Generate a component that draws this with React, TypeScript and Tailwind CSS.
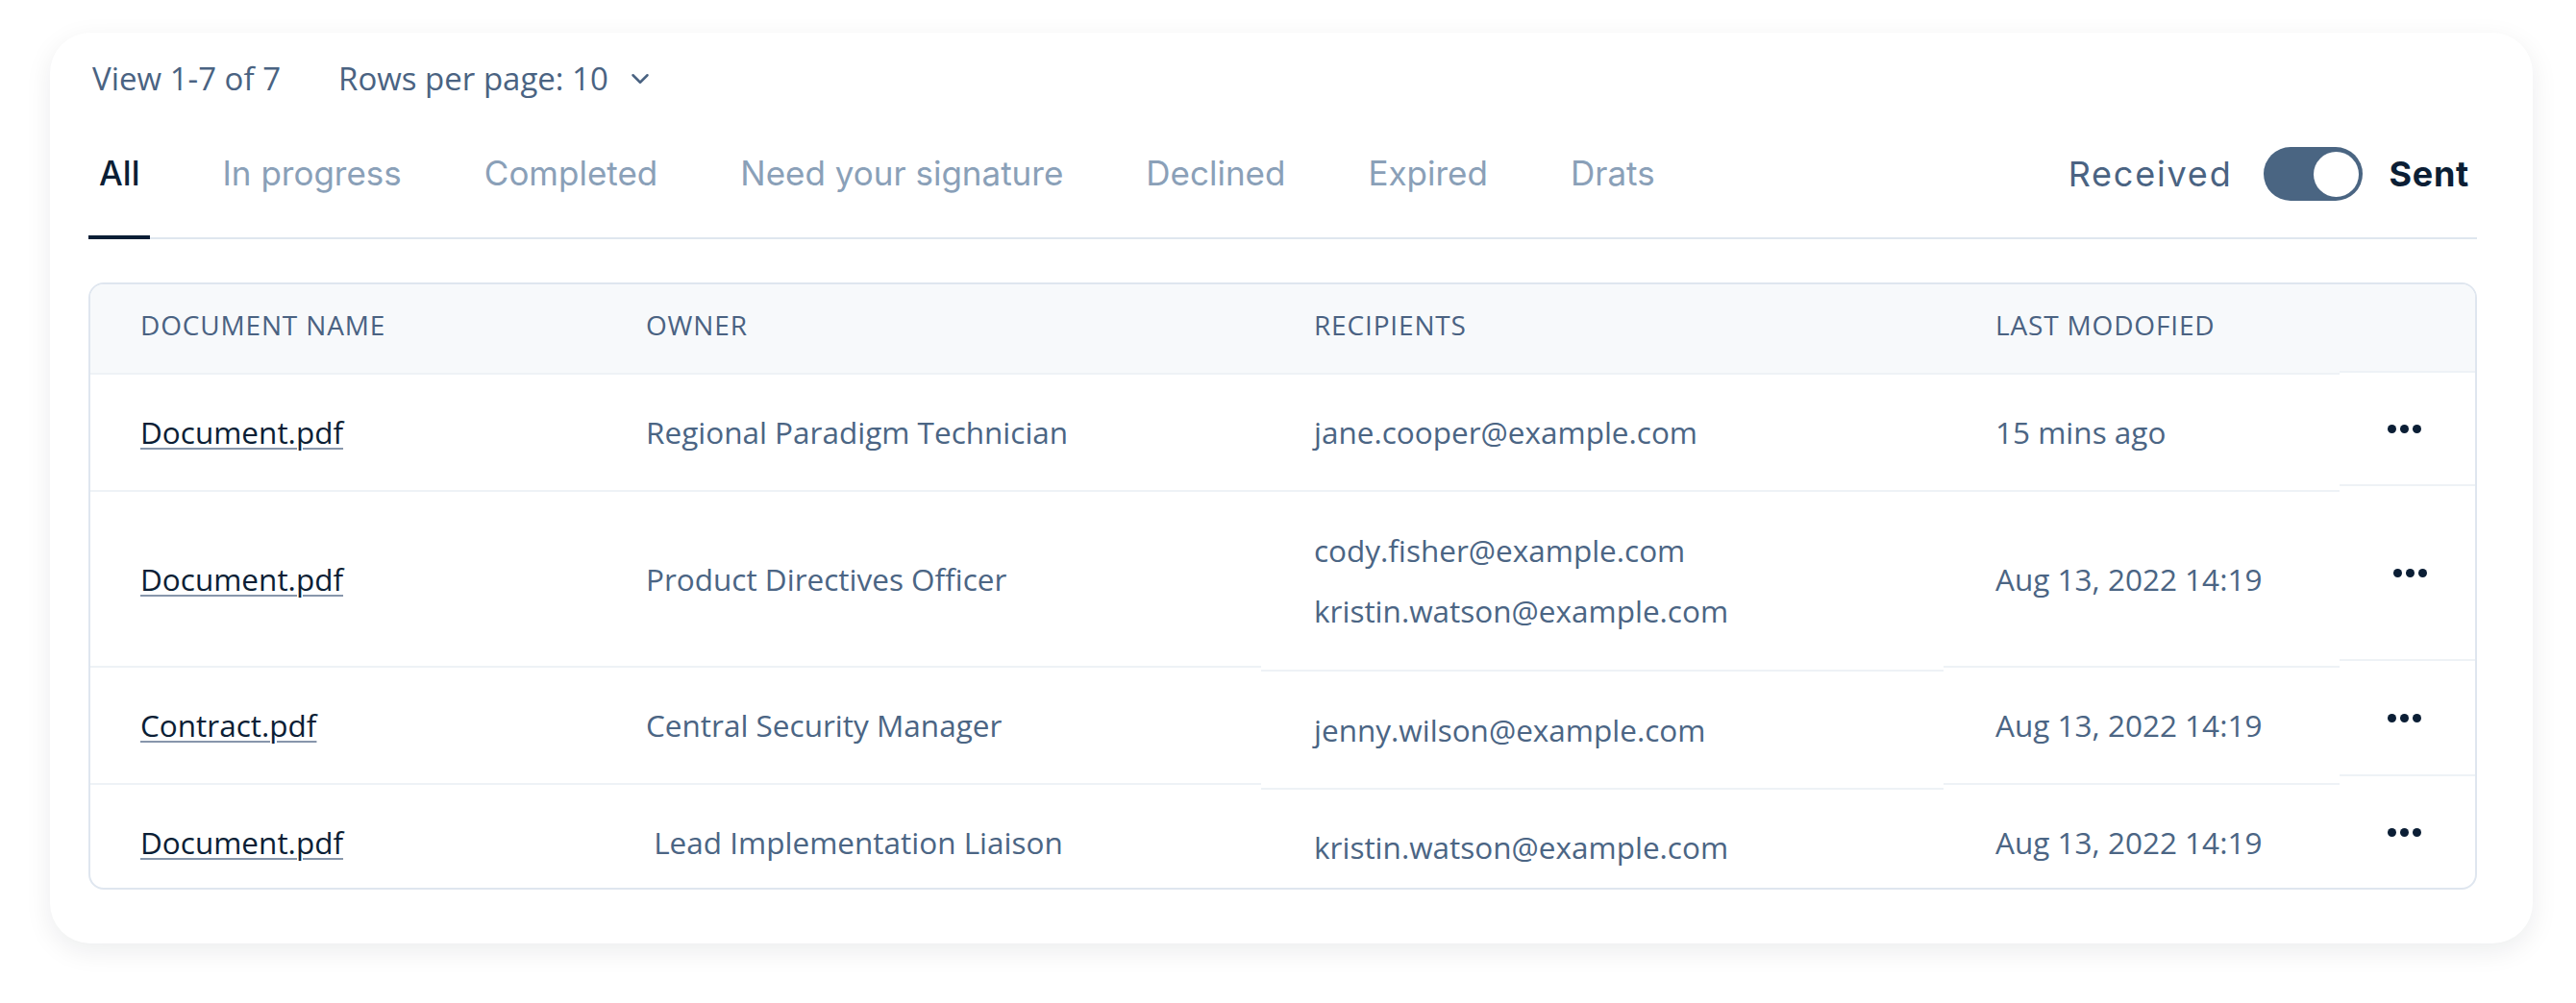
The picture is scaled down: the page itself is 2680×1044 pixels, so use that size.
import { ChevronDown } from "lucide-react"

const tabs = ["All", "In progress", "Completed", "Need your signature", "Declined", "Expired", "Drats"]

const docs = ["Document.pdf", "Document.pdf", "Contract.pdf", "Document.pdf"]
const owners = ["Regional Paradigm Technician", "Product Directives Officer", "Central Security Manager", " Lead Implementation Liaison"]
const recipients = [["jane.cooper@example.com"], ["cody.fisher@example.com", "kristin.watson@example.com"], ["jenny.wilson@example.com"], ["kristin.watson@example.com"]]
const modified = ["15 mins ago", "Aug 13, 2022 14:19", "Aug 13, 2022 14:19", "Aug 13, 2022 14:19"]

// row heights differ a little per column, like in the design
const baseRows = ["h-[122px]", "h-[183px]", "h-[122px]", "h-[122px]"]
const recipientRows = ["h-[122px]", "h-[187px]", "h-[123px]", "h-[122px]"]
const actionRows = ["h-[118px]", "h-[182px]", "h-[120px]", "flex-1"]

function Dots() {
  return (
    <svg width="35" height="9" viewBox="0 0 35 9" fill="#0b1e35">
      <circle cx="4.5" cy="4.5" r="4.5" />
      <circle cx="17.5" cy="4.5" r="4.5" />
      <circle cx="30.5" cy="4.5" r="4.5" />
    </svg>
  )
}

function HeaderCell({ label, pad }: { label: string; pad: string }) {
  return (
    <div className={`h-[92px] shrink-0 bg-[#f7f9fb] flex items-center pb-[8px] ${pad} text-[28px] tracking-[0.03em] uppercase text-[#4a6282]`}>
      {label}
    </div>
  )
}

export default function App() {
  return (
    <div className="min-h-screen bg-white pt-[34px] pl-[52px] font-['Open_Sans',sans-serif]">
      <div className="w-[2583px] h-[948px] rounded-[42px] bg-white shadow-[0_8px_28px_rgba(15,23,42,0.08)] pl-[40px] pr-[58px] pt-[26px]">
        {/* pagination info */}
        <div className="flex items-center h-[44px] text-[33px] leading-[44px] text-[#4a6382]">
          <span className="pl-[4px]">View 1-7 of 7</span>
          <span className="ml-[60px]">Rows per page: 10</span>
          <ChevronDown className="ml-[18px] w-[30px] h-[30px]" strokeWidth={2} />
        </div>

        {/* tabs */}
        <div className="mt-[49px] flex items-end border-b-2 border-[#dfe6ef] font-['Inter',sans-serif]">
          <div className="flex items-end gap-[64px]">
            {tabs.map((t, i) => (
              <div
                key={t}
                className={`-mb-[2px] px-[11px] pb-[41px] border-b-4 text-[35px] leading-[48px] ${
                  i === 0 ? "border-[#0b1e35] text-[#0b1e35] font-medium" : "border-transparent text-[#8aa0b8]"
                }`}
              >
                {t}
              </div>
            ))}
          </div>
          <div className="ml-auto mb-[38px] mr-[8px] flex items-center text-[36px] leading-[48px]">
            <span className="text-[#4a6382] tracking-[0.05em]">Received</span>
            <div className="ml-[32px] w-[103px] h-[56px] rounded-full bg-[#4a6582] flex items-center justify-end pr-[4px]">
              <div className="w-[47px] h-[47px] rounded-full bg-white" />
            </div>
            <span className="ml-[28px] font-bold text-[#0b1e35] tracking-[0.02em]">Sent</span>
          </div>
        </div>

        {/* table */}
        <div className="mt-[45px] h-[632px] rounded-[16px] border-2 border-[#dfe6ef] overflow-hidden flex text-[31.5px] text-[#4b6584]">
          <div className="w-[524px] flex flex-col">
            <HeaderCell label="Document name" pad="pl-[52px]" />
            {docs.map((d, i) => (
              <div key={i} className={`${baseRows[i]} shrink-0 border-t-2 border-[#eef2f6] flex items-center pl-[52px]`}>
                <span className="font-medium text-[#0b1e35] underline decoration-[#8796ab] decoration-2 underline-offset-[4px]">{d}</span>
              </div>
            ))}
          </div>
          <div className="w-[694px] flex flex-col">
            <HeaderCell label="Owner" pad="pl-[54px]" />
            {owners.map((o, i) => (
              <div key={i} className={`${baseRows[i]} shrink-0 border-t-2 border-[#eef2f6] flex items-center pl-[54px] whitespace-pre`}>
                {o}
              </div>
            ))}
          </div>
          <div className="w-[710px] flex flex-col">
            <HeaderCell label="Recipients" pad="pl-[55px]" />
            {recipients.map((r, i) => (
              <div key={i} className={`${recipientRows[i]} shrink-0 border-t-2 border-[#eef2f6] flex flex-col justify-center gap-[19px] pl-[55px] leading-[44px]`}>
                {r.map((e) => (
                  <span key={e}>{e}</span>
                ))}
              </div>
            ))}
          </div>
          <div className="w-[412px] flex flex-col">
            <HeaderCell label="Last modofied" pad="pl-[54px]" />
            {modified.map((m, i) => (
              <div key={i} className={`${baseRows[i]} shrink-0 border-t-2 border-[#eef2f6] flex items-center pl-[54px]`}>
                {m}
              </div>
            ))}
          </div>
          <div className="flex-1 flex flex-col">
            <div className="h-[90px] shrink-0 bg-[#f7f9fb]" />
            {actionRows.map((h, i) => (
              <div key={i} className={`${h} shrink-0 border-t-2 border-[#eef2f6] flex items-center justify-center ${i === 1 ? "pl-[6px]" : "pr-[6px]"}`}>
                <Dots />
              </div>
            ))}
          </div>
        </div>
      </div>
    </div>
  )
}
